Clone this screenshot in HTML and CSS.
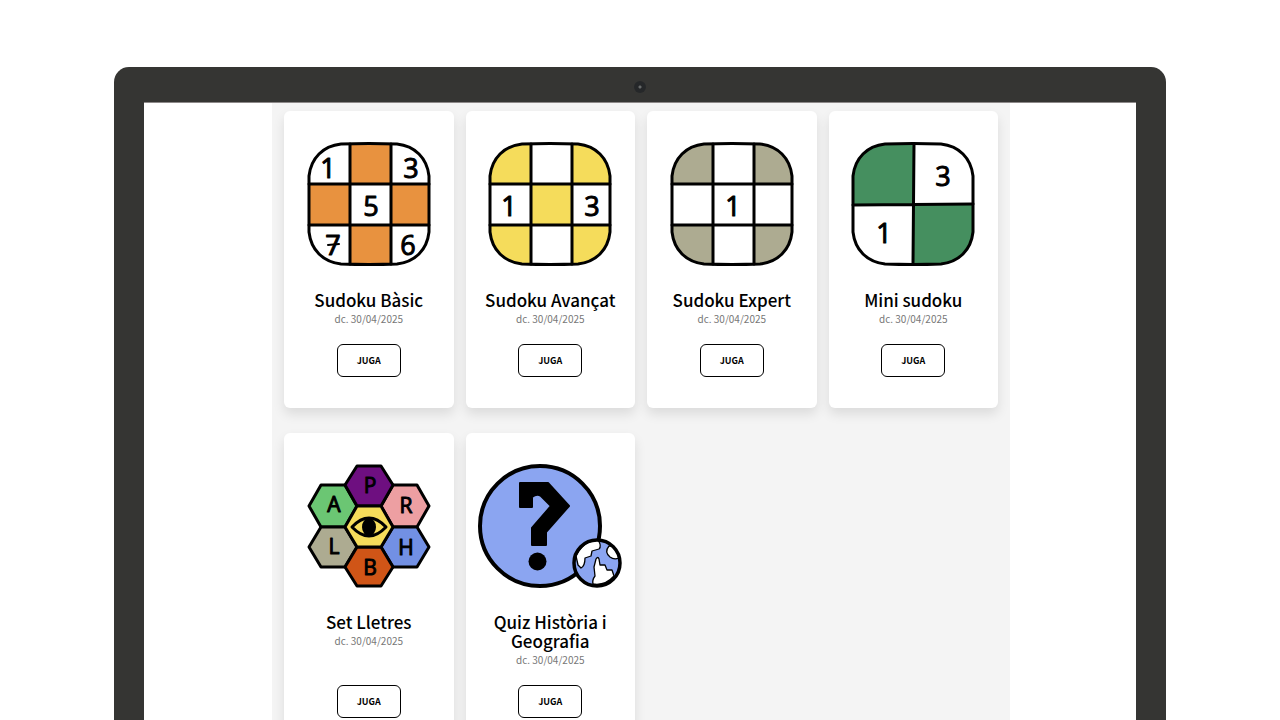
FILE: index.html
```html
<!DOCTYPE html>
<html lang="ca">
<head>
<meta charset="utf-8">
<meta name="viewport" content="width=device-width, initial-scale=1">
<title>Jocs</title>
<link rel="stylesheet" href="styles.css">
</head>
<body>
<div class="device">
  <div class="bezel"><span class="camera"></span></div>
  <div class="screen">
    <main class="games">
      <article class="card">
        <svg class="icon" viewBox="0 0 124 124" aria-hidden="true">
          <defs>
            <path id="frame" d="M34 2Q62 1 90 2C108 4 120 16 122 34V90C120 108 108 120 90 122Q62 123 34 122C16 120 4 108 2 90V34C4 16 16 4 34 2Z"/>
            <clipPath id="clip"><use href="#frame"/></clipPath>
          </defs>
          <g clip-path="url(#clip)" fill="#e8923f"><path d="M43 0H84V42H43ZM0 42H43V83H0ZM84 42H124V83H84ZM43 83H84V124H43Z"/></g>
          <path class="lines" d="M43 2V122M84 2V122M2 42H122M2 83H122"/>
          <use class="lines" href="#frame"/>
          <g class="digits"><text x="21" y="36">1</text><text x="104" y="36">3</text><text x="64" y="74">5</text><text x="26" y="113">7</text><text x="101" y="113">6</text></g>
          <path class="bar" d="M21 103L32 102"/>
        </svg>
        <h2 class="title">Sudoku Bàsic</h2>
        <p class="date">dc. 30/04/2025</p>
        <button class="play" type="button">JUGA</button>
      </article>
      <article class="card">
        <svg class="icon" viewBox="0 0 124 124" aria-hidden="true">
          <g clip-path="url(#clip)" fill="#f5dc5b"><path d="M0 0H43V42H0ZM84 0H124V42H84ZM43 42H84V83H43ZM0 83H43V124H0ZM84 83H124V124H84Z"/></g>
          <path class="lines" d="M43 2V122M84 2V122M2 42H122M2 83H122"/>
          <use class="lines" href="#frame"/>
          <g class="digits"><text x="21" y="74">1</text><text x="104" y="74">3</text></g>
        </svg>
        <h2 class="title">Sudoku Avançat</h2>
        <p class="date">dc. 30/04/2025</p>
        <button class="play" type="button">JUGA</button>
      </article>
      <article class="card">
        <svg class="icon" viewBox="0 0 124 124" aria-hidden="true">
          <g clip-path="url(#clip)" fill="#adab91"><path d="M0 0H43V42H0ZM84 0H124V42H84ZM0 83H43V124H0ZM84 83H124V124H84Z"/></g>
          <path class="lines" d="M43 2V122M84 2V122M2 42H122M2 83H122"/>
          <use class="lines" href="#frame"/>
          <g class="digits"><text x="63" y="74">1</text></g>
        </svg>
        <h2 class="title">Sudoku Expert</h2>
        <p class="date">dc. 30/04/2025</p>
        <button class="play" type="button">JUGA</button>
      </article>
      <article class="card">
        <svg class="icon" viewBox="0 0 124 124" aria-hidden="true">
          <g clip-path="url(#clip)" fill="#458f5f"><path d="M0 0H63V62H0ZM63 62H124V124H63Z"/></g>
          <path class="lines" d="M63 2L62 122M2 63L122 62"/>
          <use class="lines" href="#frame"/>
          <g class="digits"><text x="92" y="44">3</text><text x="33" y="101">1</text></g>
        </svg>
        <h2 class="title">Mini sudoku</h2>
        <p class="date">dc. 30/04/2025</p>
        <button class="play" type="button">JUGA</button>
      </article>
      <article class="card">
        <svg class="icon" viewBox="0 0 124 124" aria-hidden="true">
          <g class="hexes">
            <path d="M14 21H38L50 42L38 63H14L2 42Z" fill="#6bc673"/>
            <path d="M86 21H110L122 42L110 63H86L74 42Z" fill="#ed9fa2"/>
            <path d="M14 63H38L50 83L38 103H14L2 83Z" fill="#adab91"/>
            <path d="M86 63H110L122 83L110 103H86L74 83Z" fill="#7290e4"/>
            <path d="M50 2H74L86 21L74 42H50L38 21Z" fill="#6e0f80"/>
            <path d="M50 83H74L86 103L74 122H50L38 103Z" fill="#d05517"/>
            <path d="M50 42H74L86 63L74 83H50L38 63Z" fill="#f5dc5b"/>
          </g>
          <path class="lines" d="M45 63Q62 45 79 63Q62 81 45 63Z"/>
          <ellipse cx="62" cy="63" rx="7" ry="9"/>
          <g class="letters"><text x="27" y="48">A</text><text x="63" y="29">P</text><text x="99" y="49">R</text><text x="27" y="90">L</text><text x="99" y="91">H</text><text x="63" y="111">B</text></g>
        </svg>
        <h2 class="title">Set Lletres</h2>
        <p class="date">dc. 30/04/2025</p>
        <button class="play" type="button">JUGA</button>
      </article>
      <article class="card">
        <svg class="icon icon-wide" viewBox="0 0 144 124" aria-hidden="true">
          <circle cx="62" cy="62" r="60" fill="#8ba5f1" stroke="#000" stroke-width="4"/>
          <path d="M42 19H70L91 42L68 68V81H54V64L73 42L63 32Q59 29 54 33V43H42Z" stroke="#000" stroke-width="2" stroke-linejoin="round"/>
          <circle cx="59.500" cy="97.500" r="9"/>
          <circle cx="119" cy="99" r="23" fill="#8ba5f1"/>
          <g fill="#fff" stroke="#000" stroke-width="1.300" stroke-linejoin="round">
            <path d="M98 92Q104 80 114 77L120 76Q124 82 121 85L114 87L113 92L107 94Q107 102 103 104L100 101Z"/>
            <path d="M118 95Q120 92 121 95L122 101L127 101L129 106L134 106L136 112Q127 122 115 120Q114 116 117 112L116 103Z"/>
            <path d="M131 82Q126 88 132 93Q136 96 141 94Q139 86 134 82Z"/>
          </g>
          <circle cx="119" cy="99" r="23" fill="none" stroke="#000" stroke-width="3.500"/>
        </svg>
        <h2 class="title">Quiz Història i Geografia</h2>
        <p class="date">dc. 30/04/2025</p>
        <button class="play" type="button">JUGA</button>
      </article>
    </main>
  </div>
</div>
</body>
</html>
```
FILE: styles.css
```css
* { box-sizing: border-box; }

body {
  margin: 0;
  padding: 67px 114px 0;
  background: #fff;
  color: #000;
  font-family: "Noto Sans CJK SC", "Noto Sans", sans-serif;
}

.device {
  padding: 0 30px;
  border-radius: 15px 15px 0 0;
  background: #353533;
}

.bezel {
  display: flex;
  align-items: center;
  justify-content: center;
  height: 35px;
  padding-top: 4px;
}

.camera {
  width: 12px;
  height: 12px;
  border-radius: 50%;
  background: radial-gradient(circle, #686b6b 0 1px, #252729 2px 100%);
}

.screen {
  padding: 0 126px 0 128px;
  border-top: 1px solid #8d8989;
  background: #fff;
}

.games {
  display: grid;
  grid-template-columns: repeat(4, minmax(0, 1fr));
  gap: 25px 12px;
  padding: 8px 12px 25px;
  background: #f4f4f4;
}

.card {
  display: flex;
  flex-direction: column;
  align-items: center;
  padding: 31px 12px;
  border-radius: 6px;
  background: #fff;
  box-shadow: 0 6px 12px rgba(0, 0, 0, 0.1);
  text-align: center;
}

.icon {
  display: block;
  width: 124px;
  height: 124px;
  flex: none;
}

.icon-wide { width: 144px; }

.lines,
.bar {
  fill: none;
  stroke: #000;
  stroke-width: 3px;
  stroke-linecap: round;
  stroke-linejoin: round;
}

.bar { stroke-width: 2px; }

.hexes {
  stroke: #000;
  stroke-width: 3px;
  stroke-linejoin: round;
}

.digits,
.letters {
  font-family: "Open Sans", sans-serif;
  font-size: 27px;
  text-anchor: middle;
  stroke: #000;
  stroke-width: 1px;
  stroke-linejoin: round;
}

.letters { font-size: 21px; }

.title {
  margin: 24px 0 0;
  font-size: 17px;
  font-weight: 500;
  line-height: 19px;
}

.date {
  margin: 0 0 16px;
  color: #777;
  font-size: 10px;
  line-height: 19px;
}

.play {
  width: 64px;
  height: 33px;
  margin-top: auto;
  padding: 0;
  border: 1px solid #000;
  border-radius: 6px;
  background: #fff;
  color: #000;
  font: 700 9px/1 "Noto Sans CJK SC", "Noto Sans", sans-serif;
}
```
